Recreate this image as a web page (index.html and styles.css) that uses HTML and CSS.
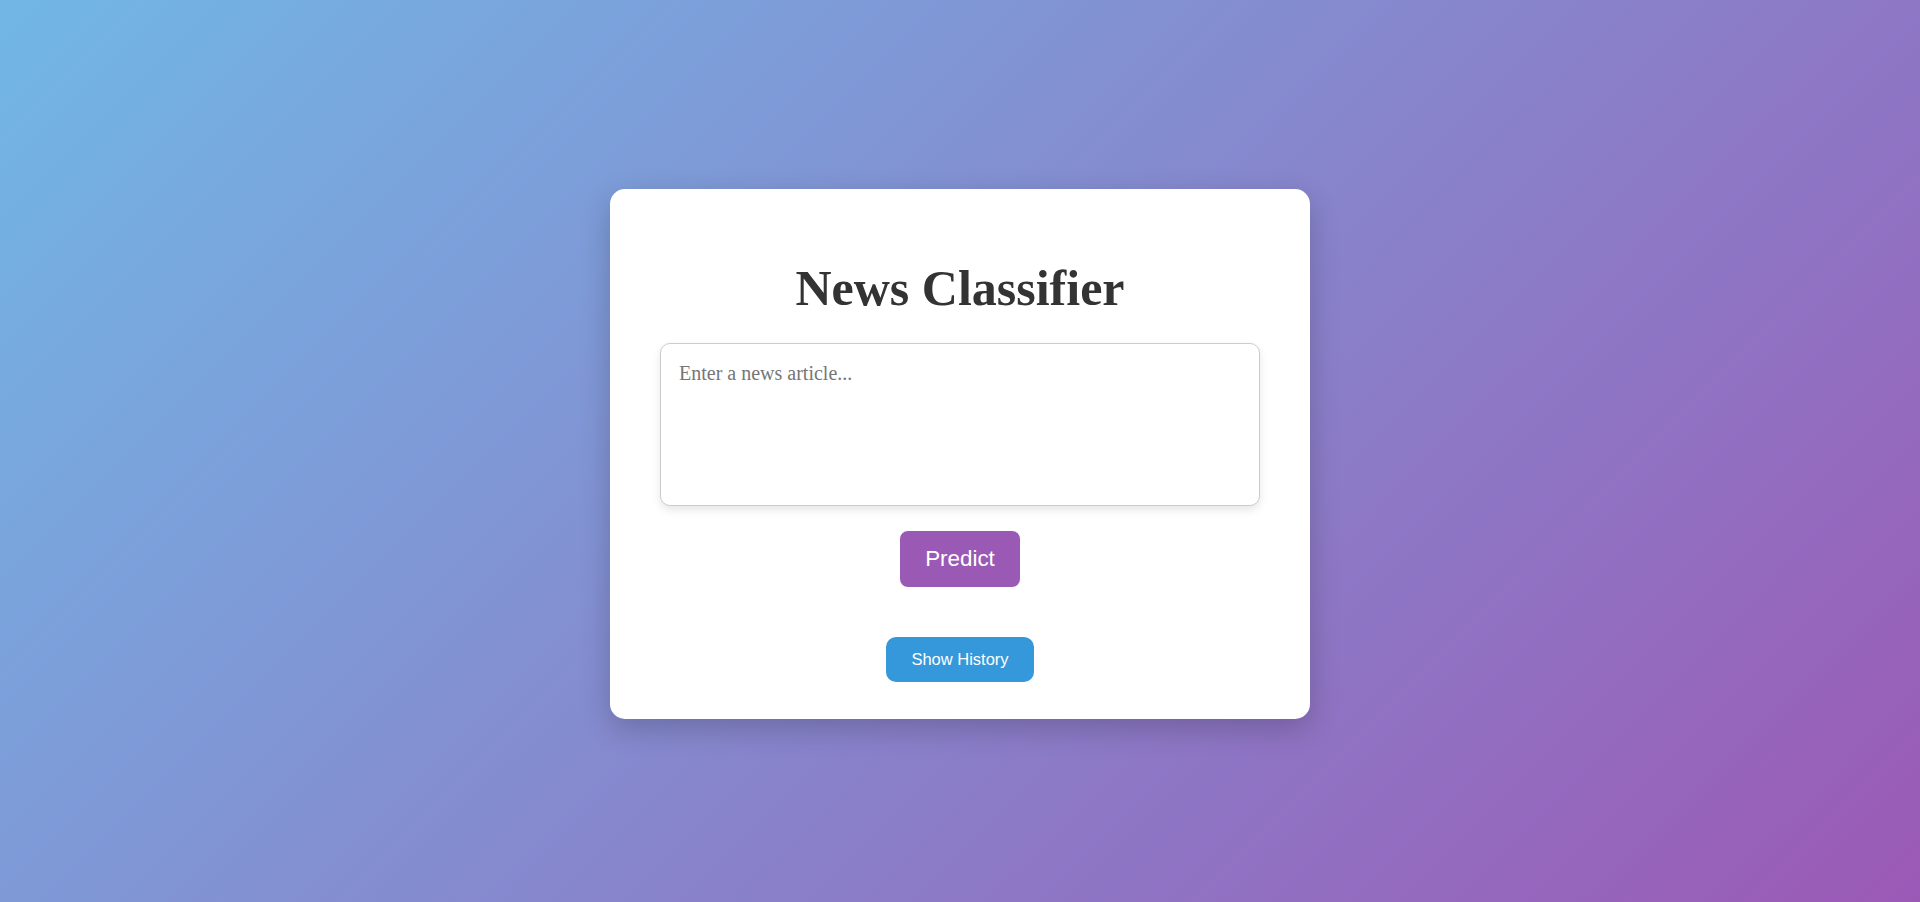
FILE: index.html
```html
<!DOCTYPE html>
<html lang="en">
<head>
<meta charset="utf-8">
<title>News Classifier</title>
<link rel="stylesheet" href="styles.css">
</head>
<body>
<main class="page">
  <section class="card">
    <h1 class="title">News Classifier</h1>
    <textarea class="article-input" placeholder="Enter a news article..."></textarea>
    <button class="btn btn-predict" type="button">Predict</button>
    <button class="btn btn-history" type="button">Show History</button>
  </section>
</main>
</body>
</html>
```

FILE: styles.css
```css
* { box-sizing: border-box; }

html, body {
  margin: 0;
  padding: 0;
}

body {
  font-family: "Liberation Serif", "Times New Roman", serif;
  background: linear-gradient(135deg, #71b7e6, #9b59b6);
  min-height: 100vh;
}

.page {
  height: 100vh;
  padding-top: 6px;
  display: flex;
  align-items: center;
  justify-content: center;
}

.card {
  width: 700px;
  background: #ffffff;
  border-radius: 15px;
  padding: 40px 50px 37px;
  box-shadow: 0 10px 30px rgba(0, 0, 0, 0.2);
  display: flex;
  flex-direction: column;
  align-items: center;
}

.title {
  margin: 32px 0 27px;
  font-size: 50px;
  line-height: 55px;
  font-weight: bold;
  color: #333333;
  text-align: center;
}

.article-input {
  display: block;
  width: 100%;
  height: 163px;
  margin: 0;
  padding: 18px 18px 16px;
  border: 1px solid #cccccc;
  border-radius: 10px;
  box-shadow: 0 4px 8px rgba(0, 0, 0, 0.1);
  font-family: "Liberation Serif", "Times New Roman", serif;
  font-size: 20px;
  line-height: 23px;
  color: #333333;
  resize: none;
  outline: none;
}

.article-input::placeholder {
  color: #767676;
}

.btn {
  border: none;
  color: #ffffff;
  font-family: "Liberation Sans", Arial, sans-serif;
  cursor: pointer;
}

.btn-predict {
  margin-top: 25px;
  padding: 15px 25px;
  font-size: 22.4px;
  line-height: 26px;
  background: #9b59b6;
  border-radius: 8px;
}

.btn-history {
  margin-top: 50px;
  padding: 13px 25.5px;
  font-size: 16.5px;
  line-height: 19px;
  background: #3498db;
  border-radius: 10px;
}
```
